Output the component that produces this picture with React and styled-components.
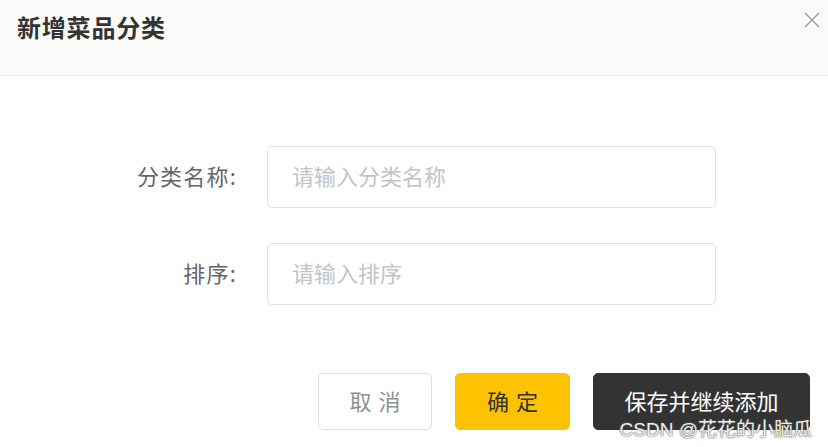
import React from 'react'
import styled, { createGlobalStyle } from 'styled-components'

const GlobalStyle = createGlobalStyle`
  html, body {
    margin: 0;
    padding: 0;
    background: #fff;
  }
  body {
    font-family: "Noto Sans CJK SC", "Noto Sans", sans-serif;
  }
`

const Dialog = styled.div`
  position: relative;
  width: 828px;
  height: 447px;
  background: #fff;
  overflow: hidden;
`

const Header = styled.div`
  height: 76px;
  background: #fafaf8;
  border-bottom: 1px solid #e6e6e6;
  display: flex;
  align-items: flex-start;
  justify-content: space-between;
  padding: 10px 8px 0 17px;
  box-sizing: border-box;
`

const Title = styled.h3`
  margin: 0;
  font-size: 24px;
  font-weight: 700;
  color: #333;
  line-height: 34px;
  letter-spacing: 0.8px;
`

const Close = styled.button`
  border: 0;
  background: none;
  padding: 0;
  width: 16px;
  height: 16px;
  margin-top: 2px;
  cursor: pointer;
  display: flex;
`

const Form = styled.form`
  display: flex;
  flex-direction: column;
  gap: 35px;
  padding-top: 70px;
`

const Row = styled.div`
  display: flex;
  align-items: center;
  gap: 30px;
`

const Label = styled.label`
  width: 237px;
  padding-bottom: 4px;
  text-align: right;
  font-size: 22px;
  color: #64666c;
  letter-spacing: 1.2px;
`

const Input = styled.input`
  width: 449px;
  height: 62px;
  box-sizing: border-box;
  border: 1px solid #dcdfe6;
  border-radius: 5px;
  padding: 0 24px 4px;
  font-family: inherit;
  font-size: 22px;
  color: #606266;
  outline: none;

  &::placeholder {
    color: #c0c4cc;
  }
`

const Footer = styled.div`
  display: flex;
  justify-content: flex-end;
  gap: 23px;
  padding: 68px 18px 0 0;
`

const Button = styled.button`
  height: 57px;
  width: ${p => p.width}px;
  box-sizing: border-box;
  border-radius: 5px;
  padding: 0 0 4px;
  font-family: inherit;
  font-size: 22px;
  letter-spacing: ${p => p.spaced ? '7px' : '0'};
  text-indent: ${p => p.spaced ? '7px' : '0'};
  border: 1px solid ${p => p.border || p.bg};
  background: ${p => p.bg};
  color: ${p => p.color};
  cursor: pointer;
`

const Watermark = styled.div`
  position: absolute;
  right: 16px;
  bottom: 6px;
  font-family: "Liberation Sans", "Noto Sans CJK SC", sans-serif;
  font-size: 19px;
  color: rgba(255, 255, 255, 0.92);
  text-shadow: 0 0 1px #555, 0 0 2px #666;
  pointer-events: none;
`

export default function App() {
  return (
    <>
      <GlobalStyle />
      <Dialog>
        <Header>
          <Title>新增菜品分类</Title>
          <Close aria-label="关闭">
            <svg width="16" height="16" viewBox="0 0 16 16">
              <path d="M1 1 L15 15 M15 1 L1 15" stroke="#9a9a9a" strokeWidth="1.4" fill="none" />
            </svg>
          </Close>
        </Header>
        <Form>
          <Row>
            <Label>分类名称:</Label>
            <Input placeholder="请输入分类名称" />
          </Row>
          <Row>
            <Label>排序:</Label>
            <Input placeholder="请输入排序" />
          </Row>
        </Form>
        <Footer>
          <Button type="button" width={114} bg="#fff" border="#dcdfe6" color="#8d9097" spaced>取消</Button>
          <Button type="button" width={115} bg="#ffc200" color="#333" spaced>确定</Button>
          <Button type="button" width={217} bg="#333" color="#fff">保存并继续添加</Button>
        </Footer>
        <Watermark>CSDN @花花的小脑瓜</Watermark>
      </Dialog>
    </>
  )
}
